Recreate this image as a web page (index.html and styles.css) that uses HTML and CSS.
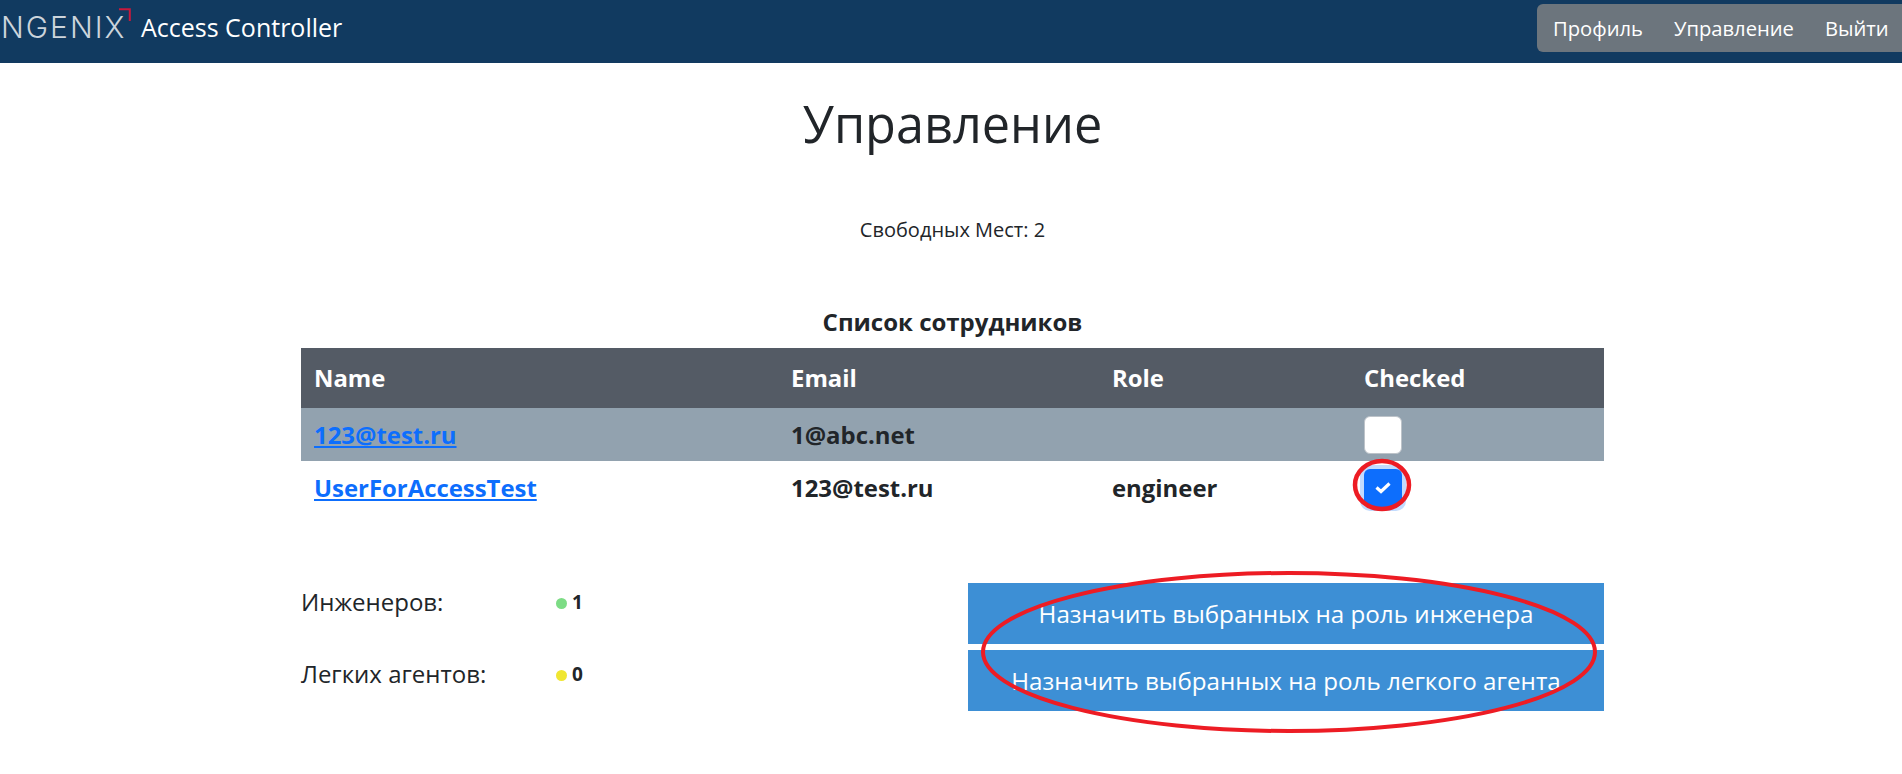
FILE: index.html
```html
<!DOCTYPE html>
<html lang="ru">
<head>
<meta charset="utf-8">
<title>Access Controller</title>
<link rel="stylesheet" href="styles.css">
</head>
<body>
<nav class="navbar">
  <div class="brand">
    <span class="logo">NGENIX<svg class="logo-mark" width="12" height="14" viewBox="0 0 12 14"><path d="M0 1.2H10.8V13" fill="none" stroke="#c8193c" stroke-width="2"/></svg></span>
    <span class="brand-title">Access Controller</span>
  </div>
  <div class="menu">
    <a>Профиль</a>
    <a>Управление</a>
    <a>Выйти</a>
  </div>
</nav>
<main class="page">
  <h1 class="title">Управление</h1>
  <p class="free">Свободных Мест: 2</p>
  <div class="caption">Список сотрудников</div>
  <table class="staff">
    <thead>
      <tr><th class="c1">Name</th><th class="c2">Email</th><th class="c3">Role</th><th>Checked</th></tr>
    </thead>
    <tbody>
      <tr class="striped">
        <td><a class="user" href="#">123@test.ru</a></td>
        <td>1@abc.net</td>
        <td></td>
        <td><span class="check"></span></td>
      </tr>
      <tr>
        <td><a class="user" href="#">UserForAccessTest</a></td>
        <td>123@test.ru</td>
        <td>engineer</td>
        <td>
          <span class="check checked"><svg width="16" height="13" viewBox="0 0 16 13"><path d="M1.5 6.5L6 10.5L14.5 2.5" fill="none" stroke="#fff" stroke-width="3.2"/></svg></span>
        </td>
      </tr>
    </tbody>
  </table>
  <section class="bottom">
    <div class="stats">
      <div class="stat"><span class="stat-label">Инженеров:</span><span class="stat-val"><i class="dot green"></i>1</span></div>
      <div class="stat"><span class="stat-label">Легких агентов:</span><span class="stat-val"><i class="dot yellow"></i>0</span></div>
    </div>
    <div class="actions">
      <button class="action">Назначить выбранных на роль инженера</button>
      <button class="action">Назначить выбранных на роль легкого агента</button>
    </div>
  </section>
</main>
<svg class="marks" width="1902" height="774" viewBox="0 0 1902 774">
  <ellipse cx="1382" cy="485" rx="27" ry="24" fill="none" stroke="#ed1c24" stroke-width="4.5"/>
  <ellipse cx="1289" cy="652" rx="306" ry="79" fill="none" stroke="#ed1c24" stroke-width="4"/>
</svg>
</body>
</html>
```
FILE: styles.css
```css
* { box-sizing: border-box; }
html, body { margin: 0; padding: 0; }
body {
  position: relative;
  height: 774px;
  overflow: hidden;
  background: #fff;
  color: #212529;
  font-family: "Open Sans", "Liberation Sans", sans-serif;
}
.navbar {
  height: 63px;
  background: #113a60;
  display: flex;
  align-items: flex-start;
  justify-content: space-between;
}
.brand { display: flex; align-items: center; height: 55px; padding-left: 1px; color: #fff; }
.logo {
  position: relative;
  font-family: "Inter", "Liberation Sans", sans-serif;
  font-weight: 300;
  font-size: 30px;
  line-height: 55px;
  color: #ccd4db;
  letter-spacing: 2px;
  width: 140px;
}
.logo-mark { position: absolute; left: 118px; top: 8px; }
.brand-title { font-size: 25px; line-height: 55px; }
.menu {
  margin-top: 4px;
  height: 48px;
  width: 365px;
  padding-left: 16px;
  background: #6c757d;
  border-radius: 6px 0 0 6px;
  display: flex;
  align-items: center;
  gap: 31px;
  color: #fff;
  font-size: 20.2px;
}
.page { margin: 0 298px 0 301px; }
.title {
  margin: 0;
  padding-top: 29px;
  font-size: 50.4px;
  line-height: 63px;
  font-weight: 400;
  text-align: center;
}
.free {
  margin: 0;
  padding-top: 61px;
  font-size: 20px;
  line-height: 27px;
  text-align: center;
}
.caption {
  margin-top: 62px;
  font-size: 24px;
  font-weight: 700;
  line-height: 33px;
  text-align: center;
}
.staff {
  width: 100%;
  margin-top: 10px;
  border-collapse: collapse;
  table-layout: fixed;
  font-size: 23.9px;
  font-weight: 700;
}
.staff th {
  height: 60px;
  padding: 0 13px 2px;
  background: #545b65;
  color: #fff;
  text-align: left;
}
.c1 { width: 477px; }
.c2 { width: 321px; }
.c3 { width: 252px; }
.staff td { height: 53px; padding: 0 13px; vertical-align: middle; }
.striped td { background: #92a2af; }
.user { color: #0d6efd; text-decoration: underline; }
.check {
  display: block;
  width: 38px;
  height: 38px;
  border: 1px solid #bdc3c9;
  border-radius: 6px;
  background: #fff;
}
.check.checked {
  display: flex;
  align-items: center;
  justify-content: center;
  border: 0;
  background: #0d6efd;
  box-shadow: 0 0 0 4px #c2dbfe;
}
.bottom {
  margin-top: 69px;
  display: grid;
  grid-template-columns: 667px 636px;
}
.stats { display: flex; flex-direction: column; gap: 45px; padding-top: 5px; }
.stat { display: flex; align-items: center; height: 27px; }
.stat-label { width: 255px; font-size: 24px; line-height: 27px; }
.stat-val { display: flex; align-items: center; gap: 5px; font-size: 19px; font-weight: 700; }
.dot { display: block; width: 11px; height: 11px; border-radius: 50%; margin-top: 3px; }
.green { background: #7ddc85; }
.yellow { background: #f0e631; }
.actions { display: flex; flex-direction: column; gap: 6px; }
.action {
  height: 61px;
  border: 0;
  background: #3d8fd5;
  color: #fff;
  font-family: inherit;
  font-size: 24.2px;
  padding: 0;
}
.marks { position: absolute; left: 0; top: 0; pointer-events: none; }
```
